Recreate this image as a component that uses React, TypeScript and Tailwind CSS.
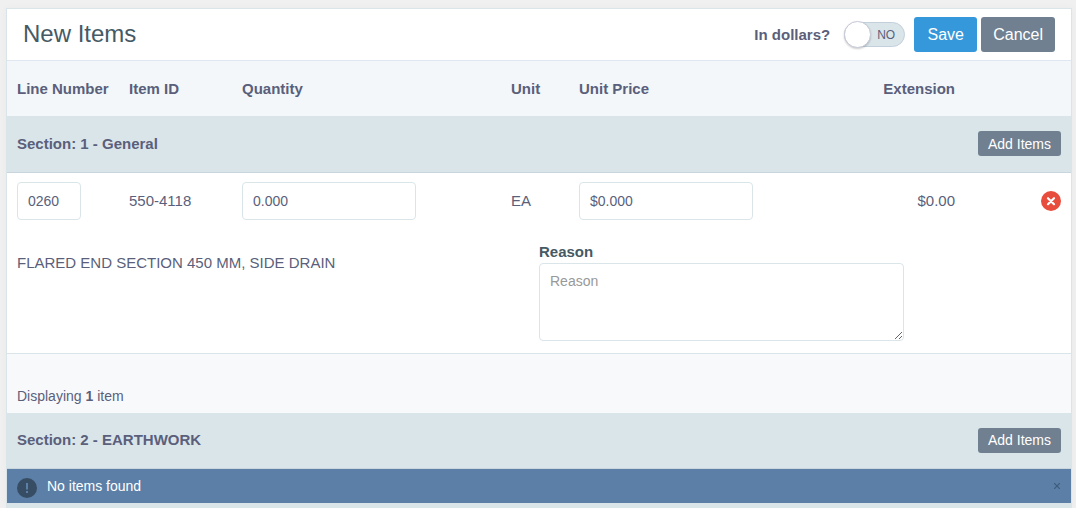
import { useState } from "react";

interface SectionRowProps {
  title: string;
}

function SectionRow({ title }: SectionRowProps) {
  return (
    <tr className="bg-[#dae5ea] border-b border-[#c9d6de]">
      <th scope="colgroup" colSpan={7} className="h-14 px-[10px]">
        <div className="flex items-center justify-between">
          <span>{title}</span>
          <button
            type="button"
            className="h-[25px] px-[10px] rounded-[3px] bg-[#708090] text-white text-[14px] font-normal"
          >
            Add Items
          </button>
        </div>
      </th>
    </tr>
  );
}

export default function App() {
  const [inDollars, setInDollars] = useState(false);
  const [lineNumber, setLineNumber] = useState("0260");
  const [quantity, setQuantity] = useState("0.000");
  const [unitPrice, setUnitPrice] = useState("$0.000");
  const [reason, setReason] = useState("");

  return (
    <main className="min-h-screen flex flex-col bg-[#f0f0f0] pt-2 pl-[6px] pr-1 font-['Liberation_Sans',Arial,sans-serif] text-[15px] leading-5 text-[#5a5f7b]">
      <section className="flex-1 border border-b-0 border-[#dae5ea] bg-[#dae5ea] shadow-[0_0_8px_rgba(0,0,0,0.03)]">
        {/* Title bar */}
        <header className="flex items-center justify-between h-[52px] px-4 bg-white border-b border-[#dfe8f1]">
          <h1 className="pb-[2px] text-[24px] leading-8 text-[#455a64]">New Items</h1>
          <div className="flex items-center gap-1">
            <label className="flex items-center gap-[14px] mr-[5px] font-bold cursor-pointer">
              In dollars?
              <input
                type="checkbox"
                className="sr-only"
                checked={inDollars}
                onChange={(e) => setInDollars(e.target.checked)}
              />
              <span
                className={`flex items-center w-[61px] h-[25px] rounded-full border border-[#c3d0dc] bg-[#dae5ea] text-[12px] font-normal ${
                  inDollars ? "flex-row-reverse" : ""
                }`}
              >
                <span className="-mx-px size-[27px] shrink-0 rounded-full border border-[#c5c8d8] bg-white shadow-[0_1px_2px_rgba(0,0,0,0.2)]" />
                <span className="flex-1 pr-[2px] text-center">{inDollars ? "YES" : "NO"}</span>
              </span>
            </label>
            <button
              type="button"
              className="w-[63px] h-[35px] rounded-[3px] bg-[#3498db] text-white text-[16px]"
            >
              Save
            </button>
            <button
              type="button"
              className="h-[35px] px-3 rounded-[3px] bg-[#708090] text-white text-[16px]"
            >
              Cancel
            </button>
          </div>
        </header>

        <table className="w-full table-fixed border-collapse text-left">
          <colgroup>
            <col className="w-[112px]" />
            <col className="w-[113px]" />
            <col />
            <col className="w-[68px]" />
            <col />
            <col className="w-[127px]" />
            <col className="w-[106px]" />
          </colgroup>
          <thead>
            <tr className="bg-[#f3f7fa] whitespace-nowrap">
              <th scope="col" className="h-[55px] px-[10px]">Line Number</th>
              <th scope="col" className="px-[10px]">Item ID</th>
              <th scope="col" className="px-[10px]">Quantity</th>
              <th scope="col" className="px-[10px]">Unit</th>
              <th scope="col" className="px-[10px]">Unit Price</th>
              <th scope="col" className="px-[10px] text-right">Extension</th>
              <td />
            </tr>
          </thead>

          <tbody>
            <SectionRow title="Section: 1 - General" />
            <tr className="bg-white">
              <td className="h-[58px] px-[10px]">
                <input
                  type="text"
                  aria-label="Line Number"
                  value={lineNumber}
                  onChange={(e) => setLineNumber(e.target.value)}
                  className="block w-16 h-[38px] px-[10px] rounded border border-[#dae5ea] bg-white text-[14px]"
                />
              </td>
              <td className="px-[10px]">550-4118</td>
              <td className="px-[10px]">
                <input
                  type="text"
                  aria-label="Quantity"
                  value={quantity}
                  onChange={(e) => setQuantity(e.target.value)}
                  className="block w-[70%] h-[38px] px-[10px] rounded border border-[#dae5ea] bg-white text-[14px]"
                />
              </td>
              <td className="px-[10px]">EA</td>
              <td className="px-[10px]">
                <input
                  type="text"
                  aria-label="Unit Price"
                  value={unitPrice}
                  onChange={(e) => setUnitPrice(e.target.value)}
                  className="block w-[70%] h-[38px] px-[10px] rounded border border-[#dae5ea] bg-white text-[14px]"
                />
              </td>
              <td className="px-[10px] text-right">$0.00</td>
              <td className="px-[10px]">
                <button type="button" aria-label="Remove item" className="block ml-auto">
                  <svg viewBox="0 0 20 20" className="block size-5">
                    <circle cx="10" cy="10" r="10" fill="#e74c3c" />
                    <path
                      d="M7 7.200l6 6M13 7.200l-6 6"
                      stroke="#fff"
                      strokeWidth="2.2"
                      strokeLinecap="round"
                    />
                  </svg>
                </button>
              </td>
            </tr>
            <tr className="bg-white border-b border-[#dae5ea]">
              <td colSpan={7} className="px-[10px] pt-[10px] pb-3">
                <div className="grid grid-cols-2">
                  <p className="pt-[11px] leading-[23px]">FLARED END SECTION 450 MM, SIDE DRAIN</p>
                  <div>
                    <label htmlFor="reason" className="block leading-[23px] font-bold text-[#455a64]">
                      Reason
                    </label>
                    <textarea
                      id="reason"
                      placeholder="Reason"
                      value={reason}
                      onChange={(e) => setReason(e.target.value)}
                      className="block w-[70%] h-[78px] px-[10px] py-[7px] rounded border border-[#dae5ea] bg-white text-[14px] leading-5 placeholder:text-[#999999]"
                    />
                  </div>
                </div>
              </td>
            </tr>
            <tr className="bg-[#f8f9fb]">
              <td colSpan={7} className="h-[59px] px-[10px] pb-[7px] align-bottom text-[14px]">
                Displaying <b>1</b> item
              </td>
            </tr>
          </tbody>

          <tbody>
            <SectionRow title="Section: 2 - EARTHWORK" />
            <tr className="bg-[#5b7fa6] text-white text-[14px]">
              <td colSpan={7} className="h-[34px] px-[10px]">
                <div role="status" className="flex items-center gap-[10px]">
                  <svg viewBox="0 0 20 20" className="size-5 mt-1">
                    <circle cx="10" cy="10" r="10" fill="#374d64" />
                    <path d="M9 5h2v6.500h-2zM9 13h2v2h-2z" fill="#5b7fa6" />
                  </svg>
                  <span className="flex-1">No items found</span>
                  <button type="button" aria-label="Dismiss" className="p-px">
                    <svg viewBox="0 0 6 6" className="block size-[6px]">
                      <path d="M0 0l6 6M6 0l-6 6" stroke="#3f5c7c" strokeWidth="1.2" />
                    </svg>
                  </button>
                </div>
              </td>
            </tr>
          </tbody>
        </table>
      </section>
    </main>
  );
}
